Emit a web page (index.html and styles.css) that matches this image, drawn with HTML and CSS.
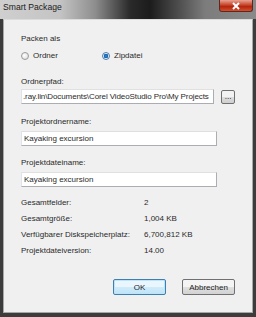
FILE: index.html
```html
<!DOCTYPE html>
<html lang="de">
<head>
<meta charset="UTF-8">
<title>Smart Package</title>
<link rel="stylesheet" href="styles.css">
</head>
<body>
<div class="window">
  <div class="titlebar">
    <span class="title">Smart Package</span>
    <span class="close">
      <svg width="10" height="8" viewBox="0 0 10 8"><path d="M2 1 L8 7 M8 1 L2 7" stroke="#fff" stroke-width="2"/></svg>
    </span>
  </div>

  <div class="client">
    <div class="lbl packen">Packen als</div>
    <div class="radios">
      <label class="radio"><span class="dot"></span>Ordner</label>
      <label class="radio on"><span class="dot"></span>Zipdatei</label>
    </div>

    <div class="lbl pfad">Ordnerpfad:</div>
    <div class="pathrow">
      <div class="field path">.ray.lin\Documents\Corel VideoStudio Pro\My Projects</div>
      <button class="browse">...</button>
    </div>

    <div class="lbl name1">Projektordnername:</div>
    <div class="field">Kayaking excursion</div>

    <div class="lbl name2">Projektdateiname:</div>
    <div class="field">Kayaking excursion</div>

    <div class="info">
      <span>Gesamtfelder:</span><span>2</span>
      <span>Gesamtgröße:</span><span>1,004 KB</span>
      <span>Verfügbarer Diskspeicherplatz:</span><span>6,700,812 KB</span>
      <span>Projektdateiversion:</span><span>14.00</span>
    </div>

    <div class="buttons">
      <button class="btn ok">OK</button>
      <button class="btn">Abbrechen</button>
    </div>
  </div>
</div>
</body>
</html>
```

FILE: styles.css
```css
body {
  margin: 0;
  padding: 0;
  font-family: "Liberation Sans", Arial, sans-serif;
  font-size: 8px;
  color: #2a2a2a;
}

.window {
  width: 256px;
  height: 317px;
  background: #3c3c3c;
  display: flex;
  flex-direction: column;
  box-sizing: border-box;
}

.titlebar {
  height: 19px;
  display: flex;
  justify-content: space-between;
  align-items: flex-start;
  background: linear-gradient(to right, #cfcfcf 0px, #c4c4c4 60px, #8e8e8e 95px, #2a2a2a 130px, #1c1c1c 150px, #505050 180px, #7c7c7c 205px, #8a8a8a 256px);
}

.title {
  font-size: 8.6px;
  line-height: 10px;
  margin: 2px 0 0 3px;
  color: #202020;
}

.close {
  width: 34px;
  height: 12px;
  margin-right: 3px;
  display: flex;
  align-items: center;
  justify-content: center;
  border: 1px solid #5a2a22;
  border-top: none;
  border-radius: 0 0 3px 3px;
  box-sizing: border-box;
  background: linear-gradient(#e8a392, #c8452d 45%, #b3250e 60%, #d4502e);
}

.client {
  flex: 1;
  margin: 0 3px 4px 3px;
  padding: 0 17px;
  background: #f0f0f0;
  border: 1px solid #a7a7a7;
  border-top-color: #dcdcdc;
}

.lbl {
  line-height: 10px;
}

.packen { margin-top: 14px; }
.pfad { margin-top: 16px; }
.name1 { margin-top: 13px; }
.name2 { margin-top: 12px; }

.radios {
  display: flex;
  margin-top: 7px;
  line-height: 10px;
}

.radio {
  display: flex;
  align-items: center;
  width: 81px;
}

.dot {
  width: 8px;
  height: 8px;
  margin-right: 4px;
  border-radius: 50%;
  border: 1px solid #9a9a9a;
  box-sizing: border-box;
  background: radial-gradient(circle at 40% 40%, #ffffff, #d8d8d8);
}

.radio.on .dot {
  border-color: #4d7fb0;
  background: radial-gradient(circle, #2d8ce0 0, #1a5fa6 2px, #e8eef5 2.5px, #cfd9e4);
}

.field {
  height: 15px;
  line-height: 13px;
  width: 196px;
  margin-top: 4px;
  box-sizing: border-box;
  border: 1px solid #abadb3;
  border-top-color: #e0e0e0;
  border-left-color: #e2e3ea;
  background: #fff;
  padding: 0 2px;
  white-space: nowrap;
  overflow: hidden;
}

.field.path {
  padding: 0 1px;
  letter-spacing: -0.1px;
}

.pathrow {
  display: flex;
  align-items: flex-start;
  margin-top: 2px;
}

.pathrow .field {
  margin-top: 0;
}

.browse {
  width: 14px;
  height: 14px;
  margin: 1px 0 0 7px;
  padding: 0;
  font: 8px "Liberation Sans", Arial, sans-serif;
  line-height: 8px;
  border: 1px solid #707070;
  border-radius: 2px;
  background: linear-gradient(#f2f2f2 50%, #dddddd 50%, #cfcfcf);
}

.info {
  display: grid;
  grid-template-columns: 123px auto;
  margin-top: 8px;
  line-height: 16px;
}

.buttons {
  display: flex;
  gap: 16px;
  margin-top: 20px;
  padding-left: 92px;
}

.btn {
  width: 54px;
  height: 16px;
  padding: 0;
  font: 8px "Liberation Sans", Arial, sans-serif;
  color: #1e1e1e;
  border: 1px solid #707070;
  border-radius: 2px;
  background: linear-gradient(#f4f4f4 50%, #e0e0e0 50%, #d2d2d2);
}

.btn.ok {
  border-color: #3c7fb1;
  box-shadow: inset 0 0 0 1px #bfe3f8;
  background: linear-gradient(#eaf6fd 50%, #d0ebfa 50%, #bee4f8);
}
```
